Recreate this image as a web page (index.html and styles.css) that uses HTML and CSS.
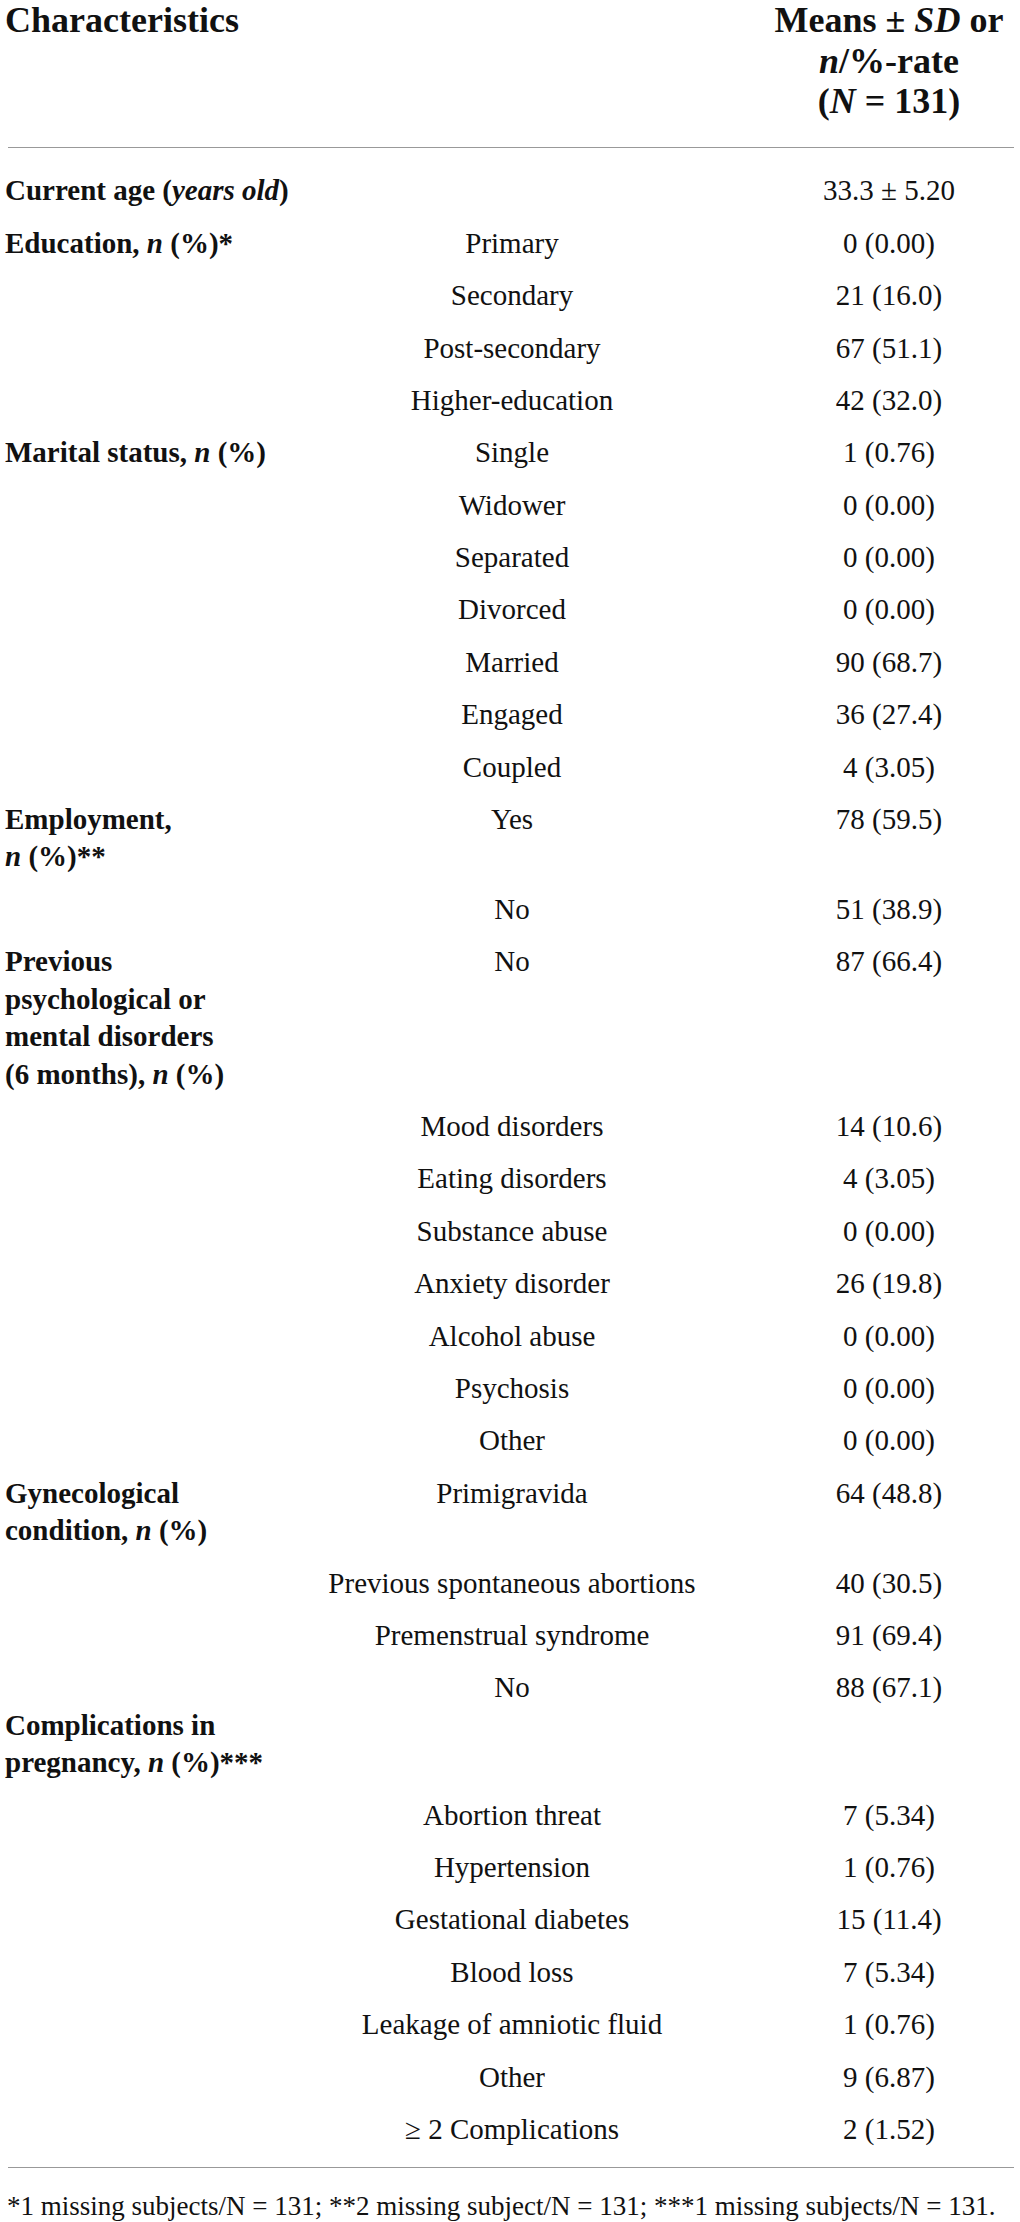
FILE: index.html
```html
<!DOCTYPE html>
<html lang="en">
<head>
<meta charset="utf-8">
<title>Characteristics table</title>
<link rel="stylesheet" href="styles.css">
</head>
<body>
<div class="page">
  <div class="thead grid">
    <div class="lab head">Characteristics</div>
    <div></div>
    <div class="val head">Means ± <i>SD</i> or<br><i>n</i>/%-rate<br>(<i>N</i> = 131)</div>
  </div>
  <div class="rule"></div>
  <div class="tbody grid">
    <div class="lab">Current age (<i>years old</i>)</div><div class="mid"></div><div class="val">33.3 ± 5.20</div>
    <div class="lab">Education, <i>n</i> (%)*</div><div class="mid">Primary</div><div class="val">0 (0.00)</div>
    <div class="lab"></div><div class="mid">Secondary</div><div class="val">21 (16.0)</div>
    <div class="lab"></div><div class="mid">Post-secondary</div><div class="val">67 (51.1)</div>
    <div class="lab"></div><div class="mid">Higher-education</div><div class="val">42 (32.0)</div>
    <div class="lab">Marital status, <i>n</i> (%)</div><div class="mid">Single</div><div class="val">1 (0.76)</div>
    <div class="lab"></div><div class="mid">Widower</div><div class="val">0 (0.00)</div>
    <div class="lab"></div><div class="mid">Separated</div><div class="val">0 (0.00)</div>
    <div class="lab"></div><div class="mid">Divorced</div><div class="val">0 (0.00)</div>
    <div class="lab"></div><div class="mid">Married</div><div class="val">90 (68.7)</div>
    <div class="lab"></div><div class="mid">Engaged</div><div class="val">36 (27.4)</div>
    <div class="lab"></div><div class="mid">Coupled</div><div class="val">4 (3.05)</div>
    <div class="lab">Employment,<br><i>n</i> (%)**</div><div class="mid">Yes</div><div class="val">78 (59.5)</div>
    <div class="lab"></div><div class="mid">No</div><div class="val">51 (38.9)</div>
    <div class="lab">Previous<br>psychological or<br>mental disorders<br>(6 months), <i>n</i> (%)</div><div class="mid">No</div><div class="val">87 (66.4)</div>
    <div class="lab"></div><div class="mid">Mood disorders</div><div class="val">14 (10.6)</div>
    <div class="lab"></div><div class="mid">Eating disorders</div><div class="val">4 (3.05)</div>
    <div class="lab"></div><div class="mid">Substance abuse</div><div class="val">0 (0.00)</div>
    <div class="lab"></div><div class="mid">Anxiety disorder</div><div class="val">26 (19.8)</div>
    <div class="lab"></div><div class="mid">Alcohol abuse</div><div class="val">0 (0.00)</div>
    <div class="lab"></div><div class="mid">Psychosis</div><div class="val">0 (0.00)</div>
    <div class="lab"></div><div class="mid">Other</div><div class="val">0 (0.00)</div>
    <div class="lab">Gynecological<br>condition, <i>n</i> (%)</div><div class="mid">Primigravida</div><div class="val">64 (48.8)</div>
    <div class="lab"></div><div class="mid">Previous spontaneous abortions</div><div class="val">40 (30.5)</div>
    <div class="lab"></div><div class="mid">Premenstrual syndrome</div><div class="val">91 (69.4)</div>
    <div class="lab offset">Complications in<br>pregnancy, <i>n</i> (%)***</div><div class="mid">No</div><div class="val">88 (67.1)</div>
    <div class="lab"></div><div class="mid">Abortion threat</div><div class="val">7 (5.34)</div>
    <div class="lab"></div><div class="mid">Hypertension</div><div class="val">1 (0.76)</div>
    <div class="lab"></div><div class="mid">Gestational diabetes</div><div class="val">15 (11.4)</div>
    <div class="lab"></div><div class="mid">Blood loss</div><div class="val">7 (5.34)</div>
    <div class="lab"></div><div class="mid">Leakage of amniotic fluid</div><div class="val">1 (0.76)</div>
    <div class="lab"></div><div class="mid">Other</div><div class="val">9 (6.87)</div>
    <div class="lab"></div><div class="mid"><span class="ge">≥</span> 2 Complications</div><div class="val">2 (1.52)</div>
  </div>
  <div class="rule rule-bottom"></div>
  <p class="note">*1 missing subjects/N = 131; **2 missing subject/N = 131; ***1 missing subjects/N = 131.</p>
</div>
</body>
</html>
```

FILE: styles.css
```css
html, body {
  margin: 0;
  padding: 0;
  background: #ffffff;
}

body {
  font-family: "Liberation Serif", "Times New Roman", serif;
  color: #111111;
}

.page {
  width: 1020px;
}

.grid {
  display: grid;
  grid-template-columns: 255px 464px 250px;
  column-gap: 20px;
  padding-left: 5px;
}

.thead {
  font-size: 36px;
  line-height: 40.5px;
  font-weight: bold;
  padding-bottom: 25.5px;
}

.thead .lab,
.thead .val {
  padding: 0;
}

.tbody {
  font-size: 29px;
  line-height: 37.5px;
  padding-top: 17px;
}

.lab,
.mid,
.val {
  padding: 7.45px 0;
  white-space: nowrap;
}

.lab {
  font-weight: bold;
  text-align: left;
}

.lab.offset {
  padding-top: 44.95px;
}

.mid,
.val {
  text-align: center;
}

.rule {
  height: 1px;
  margin: 0 6px 0 8px;
  background: #999999;
}

.rule-bottom {
  margin-top: 11px;
}

.ge {
  text-decoration: none;
}

.note {
  margin: 20px 0 0 0;
  padding-left: 7px;
  font-size: 27px;
  line-height: 37.5px;
  white-space: nowrap;
}
```
